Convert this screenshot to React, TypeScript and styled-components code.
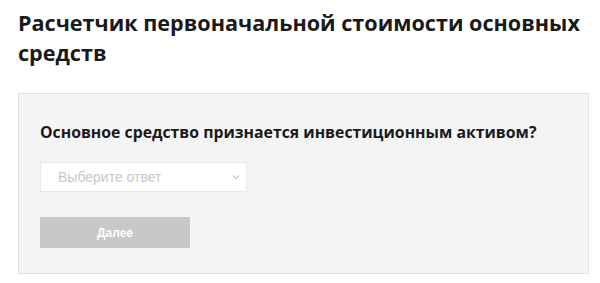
import React from "react";
import styled, { createGlobalStyle } from "styled-components";

const Global = createGlobalStyle`
  html, body { margin: 0; padding: 0; background: #fff; }
  body { font-family: "Open Sans", "Liberation Sans", sans-serif; }
`;

const Page = styled.div`
  padding: 8px 11px 0 18px;
`;

const Title = styled.h1`
  margin: 0 0 25px;
  font-size: 21.6px;
  line-height: 30px;
  font-weight: 700;
  color: #1a1a1a;
`;

const Panel = styled.div`
  background: #f4f4f4;
  border: 1px solid #e2e2e2;
  padding: 26px 21px 25px;
  display: flex;
  flex-direction: column;
  align-items: flex-start;
`;

const Question = styled.div`
  font-size: 15.8px;
  line-height: 24px;
  font-weight: 700;
  color: #1a1a1a;
  margin-bottom: 18px;
`;

const SelectBox = styled.div`
  width: 207px;
  height: 30px;
  box-sizing: border-box;
  background: #fff;
  border: 1px solid #e8e8e8;
  display: flex;
  align-items: center;
  justify-content: space-between;
  padding: 0 6px 0 17px;
  font-family: "Liberation Sans", Arial, sans-serif;
  font-size: 14px;
  color: #c8c8c8;
  margin-bottom: 25px;
`;

const Button = styled.button`
  width: 150px;
  height: 31px;
  border: none;
  background: #c8c8c8;
  color: #fff;
  font-family: "Liberation Sans", Arial, sans-serif;
  font-size: 12px;
  font-weight: 700;
  cursor: default;
`;

export default function App() {
  return (
    <>
      <Global />
      <Page>
        <Title>Расчетчик первоначальной стоимости основных средств</Title>
        <Panel>
          <Question>Основное средство признается инвестиционным активом?</Question>
          <SelectBox>
            <span>Выберите ответ</span>
            <svg width="8" height="6" viewBox="0 0 8 6">
              <path d="M1 1.5 L4 4.5 L7 1.5" fill="none" stroke="#c8c8c8" strokeWidth="1.2" />
            </svg>
          </SelectBox>
          <Button>Далее</Button>
        </Panel>
      </Page>
    </>
  );
}
